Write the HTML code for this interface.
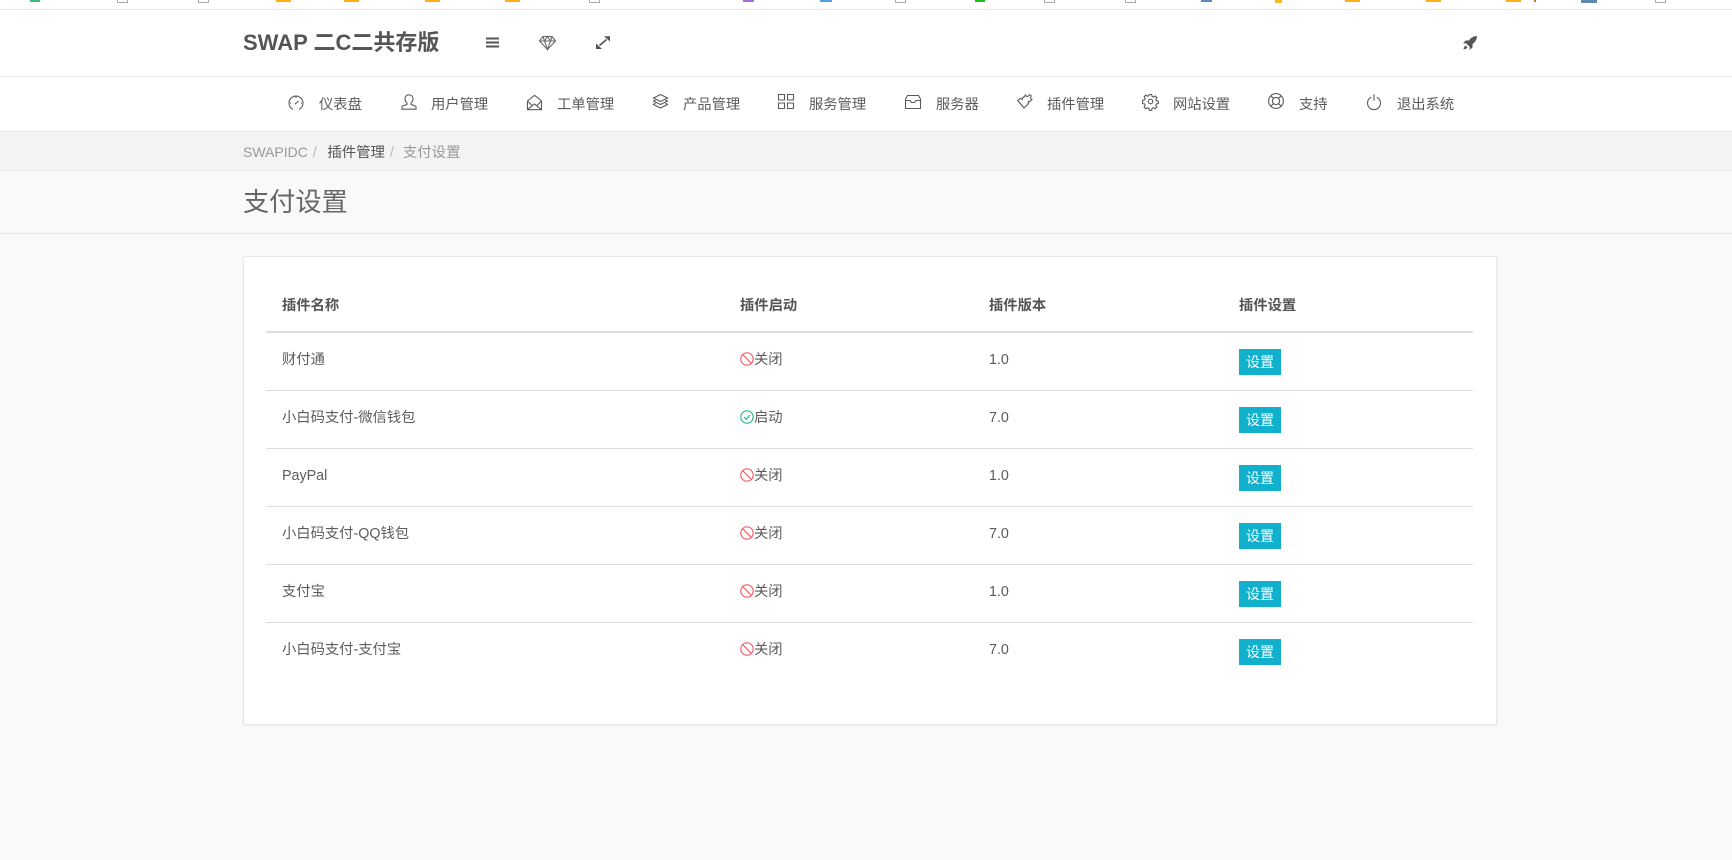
<!DOCTYPE html>
<html lang="zh-CN">
<head>
<meta charset="utf-8">
<title>支付设置</title>
<style>
*{box-sizing:border-box}
html,body{margin:0;padding:0}
body{width:1732px;height:860px;overflow:hidden;position:relative;background:#f9f9f9;font-family:"Liberation Sans","Noto Sans CJK SC",sans-serif;font-size:14.3px;color:#5c5c5c}
.top{position:absolute;left:0;top:0;width:1732px;height:10px;background:#fff;border-bottom:1px solid #e7e7e7}
.top i{position:absolute;top:0;height:2px;display:block}
.o{background:#fcae14}
.g{border:1px solid #aaa;border-top:0;background:#fff;height:3px!important}
.header{position:absolute;left:0;top:10px;width:1732px;height:67px;background:#fff;border-bottom:1px solid #e7e7e7}
.brand{position:absolute;left:243px;top:18px;font-size:22px;line-height:30px;font-weight:700;color:#555;white-space:nowrap}
.nav{position:absolute;left:0;top:77px;width:1732px;height:55px;background:#fff;border-bottom:1px solid #e7e7e7}
.nav span{position:absolute;top:18px;line-height:20px;color:#5c5c5c;white-space:nowrap}
svg{position:absolute;overflow:visible;fill:none;stroke:#5a5a5a;stroke-width:1.1}
.crumb{position:absolute;left:0;top:132px;width:1732px;height:39px;background:#f3f3f3;border-bottom:1px solid #e7e7e7;line-height:41px;padding-left:243px;color:#9a9a9a;white-space:nowrap;font-size:14.4px}
.crumb em{font-style:normal;font-size:14px}
.crumb b{font-weight:400;color:#555}
.crumb s{text-decoration:none;color:#bbb;margin:0 5px 0 5px}
.title{position:absolute;left:0;top:171px;width:1732px;height:63px;background:#f9f9f9;border-bottom:1px solid #e7e7e7}
.title h1{position:absolute;left:243px;top:14px;margin:0;font-size:26.2px;line-height:34px;font-weight:400;color:#666}
.card{position:absolute;left:243px;top:256px;width:1254px;height:469px;background:#fff;border:1px solid #e7e7e7;box-shadow:0 1px 2px rgba(0,0,0,.04)}
table{position:absolute;left:22px;top:21px;width:1207px;border-collapse:collapse;table-layout:fixed}
th{height:54px;padding:0 16px;text-align:left;font-weight:700;color:#555;border-bottom:2px solid #ddd}
td{height:58px;padding:17px 16px 0;vertical-align:top;line-height:20px;border-top:1px solid #ddd;color:#5c5c5c}
tr:first-child td{border-top:0}
tbody tr:last-child td{border-bottom:0}
.st{position:relative;padding-left:14px;display:inline-block}
.st svg{left:0;top:2px;stroke-width:1.2}
.off svg{stroke:#f0606a}
.on svg{stroke:#27b795}
.btn{display:block;width:42px;height:26px;margin-top:-1px;background:#11b1cd;color:#fff;text-align:center;line-height:26px;font-size:14px}
</style>
</head>
<body>
<div class="top">
<i style="left:30px;width:10px;background:#3fbf75"></i>
<i class="g" style="left:117px;width:11px"></i>
<i class="g" style="left:198px;width:11px"></i>
<i class="o" style="left:276px;width:15px"></i>
<i class="o" style="left:344px;width:15px"></i>
<i class="o" style="left:425px;width:15px"></i>
<i class="o" style="left:505px;width:15px"></i>
<i class="g" style="left:589px;width:11px"></i>
<i style="left:743px;width:11px;background:#a96be0"></i>
<i style="left:820px;width:12px;background:#4ea6d8"></i>
<i class="g" style="left:895px;width:11px"></i>
<i style="left:975px;width:10px;background:#1cc01c"></i>
<i class="g" style="left:1044px;width:11px"></i>
<i class="g" style="left:1125px;width:11px"></i>
<i style="left:1201px;width:11px;background:#5b8bc0"></i>
<i style="left:1275px;width:7px;height:3px;background:#fbb81c"></i>
<i class="o" style="left:1345px;width:15px"></i>
<i class="o" style="left:1426px;width:15px"></i>
<i class="o" style="left:1506px;width:15px"></i>
<i style="left:1534px;width:2px;background:#b5793a"></i>
<i style="left:1581px;width:16px;height:3px;background:#5f88b5"></i>
<i class="g" style="left:1655px;width:11px"></i>
</div>

<div class="header">
<div class="brand">SWAP 二C二共存版</div>
<svg style="left:486px;top:27px;stroke-width:2;stroke:#555" width="13" height="11" viewBox="0 0 13 11"><path d="M0 1.5h13M0 5.5h13M0 9.5h13"/></svg>
<svg style="left:539px;top:26px;stroke:#666" width="17" height="14" viewBox="0 0 17 14"><path d="M4 .5h9l3.500 4.500-8 8.500-8-8.500zM.5 5h16M5.500 5l3 8.500 3-8.500M4 .5l1.500 4.500 3-4.500 3 4.500 1.500-4.500"/></svg>
<svg style="left:596px;top:26px;stroke:#555;stroke-width:1.7" width="14" height="13" viewBox="0 0 14 13"><path d="M3.500 9.500l7-6"/><path d="M8 .2h6V5.500zM0 7.500V13H6z" fill="#555" stroke="none"/></svg>
<svg style="left:1463px;top:26px;stroke:none;fill:#555" width="14" height="14" viewBox="0 0 14 14"><path d="M14 0c-3.500.2-6 1.500-8 4.500H2.500L0 7.500l3-.3 3.800 3.800-.3 3 3-2.500V8c3-2 4.300-4.500 4.500-8zM2.500 9.500C1.300 10.300.800 12 .5 13.500c1.500-.3 3.200-.8 4-2z"/></svg>
</div>

<div class="nav">
<svg style="left:288px;top:18px" width="16" height="16" viewBox="0 0 16 16"><path d="M5 14.400A7 7 0 1 1 11 14.400M8 1.500v1.500M2 8h1M13 8h1M6.800 9.200L10.500 6"/></svg>
<span style="left:319px">仪表盘</span>
<svg style="left:401px;top:17px" width="16" height="16" viewBox="0 0 16 16"><path d="M8 .8C5.400.8 4 2.600 4 5c0 1.800.8 3.200 2 4v1.200c0 .8-4.500 1-5 2.600v2.400h14v-2.400c-.5-1.600-5-1.800-5-2.600V9c1.200-.8 2-2.200 2-4 0-2.400-1.400-4.200-4-4.200z"/></svg>
<span style="left:431px">用户管理</span>
<svg style="left:527px;top:18px" width="15" height="15" viewBox="0 0 15 15"><path d="M.5 6L7.500.3l7 5.700v8.700H.5zM.5 6l5 5M14.500 6l-5 5M.5 14.700l7-5.700 7 5.700"/></svg>
<span style="left:557px">工单管理</span>
<svg style="left:653px;top:17px" width="15" height="15" viewBox="0 0 15 15"><path d="M7.500.5l7 3.500-7 3.500-7-3.500zM2.500 6L.5 7l7 3.500 7-3.500-2-1M2.500 9L.5 10.500l7 3.500 7-3.500-2-1.500"/></svg>
<span style="left:683px">产品管理</span>
<svg style="left:778px;top:17px" width="16" height="15" viewBox="0 0 16 15"><path d="M.5.500h6v5.500h-6zM9.500.500h6v5.500h-6zM.5 9h6v5.500h-6zM9.500 9h6v5.500h-6z"/></svg>
<span style="left:809px">服务管理</span>
<svg style="left:905px;top:18px" width="16" height="14" viewBox="0 0 16 14"><path d="M2.500.5h11l2 3.500v9.500H.5V4zM.5 5.500h4.500l1.500 2h3l1.500-2h4.500"/></svg>
<span style="left:936px">服务器</span>
<svg style="left:1017px;top:17px" width="16" height="15" viewBox="0 0 16 15"><path d="M.7 6.500L7 14l4.500-4.500c-1-1.200-.5-2.500 1-1.700L15 5.500c-1-1-2.200-1.500-1-3 .5-1-1-2.200-2-1.500-1 1-.7 2-2 1.500L8.200 1c-.2 1.500-1.200 2.500-2.200 2-1 1.500 0 2.500-1 2.500-1-.5-1.500-1.500-2-1z"/></svg>
<span style="left:1047px">插件管理</span>
<svg style="left:1143px;top:17px" width="15" height="15" viewBox="0 0 15 15"><circle cx="7.500" cy="7.500" r="2.300"/><path d="M6.300.5h2.400l.4 2 1.300.6 1.800-1.100 1.700 1.700-1.100 1.800.6 1.300 2 .4v2.400l-2 .4-.6 1.300 1.100 1.800-1.700 1.700-1.800-1.100-1.300.6-.4 2H6.300l-.4-2-1.300-.6-1.800 1.100-1.700-1.700 1.100-1.800-.6-1.300-2-.4V6.300l2-.4.6-1.300L1.100 2.800l1.700-1.700 1.800 1.100 1.300-.6z"/></svg>
<span style="left:1173px">网站设置</span>
<svg style="left:1268px;top:16px" width="16" height="16" viewBox="0 0 16 16"><circle cx="8" cy="8" r="7.400"/><circle cx="8" cy="8" r="3.600"/><path d="M2.800 2.800l2.700 2.700M13.200 2.800l-2.700 2.700M2.800 13.200l2.700-2.700M13.200 13.200l-2.700-2.700"/></svg>
<span style="left:1299px">支持</span>
<svg style="left:1367px;top:17px" width="14" height="16" viewBox="0 0 14 16"><path d="M4.200 3.200a6.500 6.500 0 1 0 5.600 0M7 .3v6.500"/></svg>
<span style="left:1397px">退出系统</span>
</div>

<div class="crumb"><em>SWAPIDC</em><s>/</s> <b style="margin-left:1.500px">插件管理</b><s>/</s> 支付设置</div>

<div class="title"><h1>支付设置</h1></div>

<div class="card">
<table>
<colgroup><col style="width:458px"><col style="width:249px"><col style="width:250px"><col style="width:250px"></colgroup>
<thead><tr><th>插件名称</th><th>插件启动</th><th>插件版本</th><th>插件设置</th></tr></thead>
<tbody>
<tr><td>财付通</td><td><span class="st off"><svg width="14" height="14" viewBox="0 0 14 14"><circle cx="7" cy="7" r="6.200"/><path d="M2.600 2.600l8.800 8.800"/></svg>关闭</span></td><td>1.0</td><td><a class="btn">设置</a></td></tr>
<tr><td>小白码支付-微信钱包</td><td><span class="st on"><svg width="14" height="14" viewBox="0 0 14 14"><circle cx="7" cy="7" r="6.200"/><path d="M4 7.200l2.200 2.200L10 5"/></svg>启动</span></td><td>7.0</td><td><a class="btn">设置</a></td></tr>
<tr><td>PayPal</td><td><span class="st off"><svg width="14" height="14" viewBox="0 0 14 14"><circle cx="7" cy="7" r="6.200"/><path d="M2.600 2.600l8.800 8.800"/></svg>关闭</span></td><td>1.0</td><td><a class="btn">设置</a></td></tr>
<tr><td>小白码支付-QQ钱包</td><td><span class="st off"><svg width="14" height="14" viewBox="0 0 14 14"><circle cx="7" cy="7" r="6.200"/><path d="M2.600 2.600l8.800 8.800"/></svg>关闭</span></td><td>7.0</td><td><a class="btn">设置</a></td></tr>
<tr><td>支付宝</td><td><span class="st off"><svg width="14" height="14" viewBox="0 0 14 14"><circle cx="7" cy="7" r="6.200"/><path d="M2.600 2.600l8.800 8.800"/></svg>关闭</span></td><td>1.0</td><td><a class="btn">设置</a></td></tr>
<tr><td>小白码支付-支付宝</td><td><span class="st off"><svg width="14" height="14" viewBox="0 0 14 14"><circle cx="7" cy="7" r="6.200"/><path d="M2.600 2.600l8.800 8.800"/></svg>关闭</span></td><td>7.0</td><td><a class="btn">设置</a></td></tr>
</tbody>
</table>
</div>
</body>
</html>
